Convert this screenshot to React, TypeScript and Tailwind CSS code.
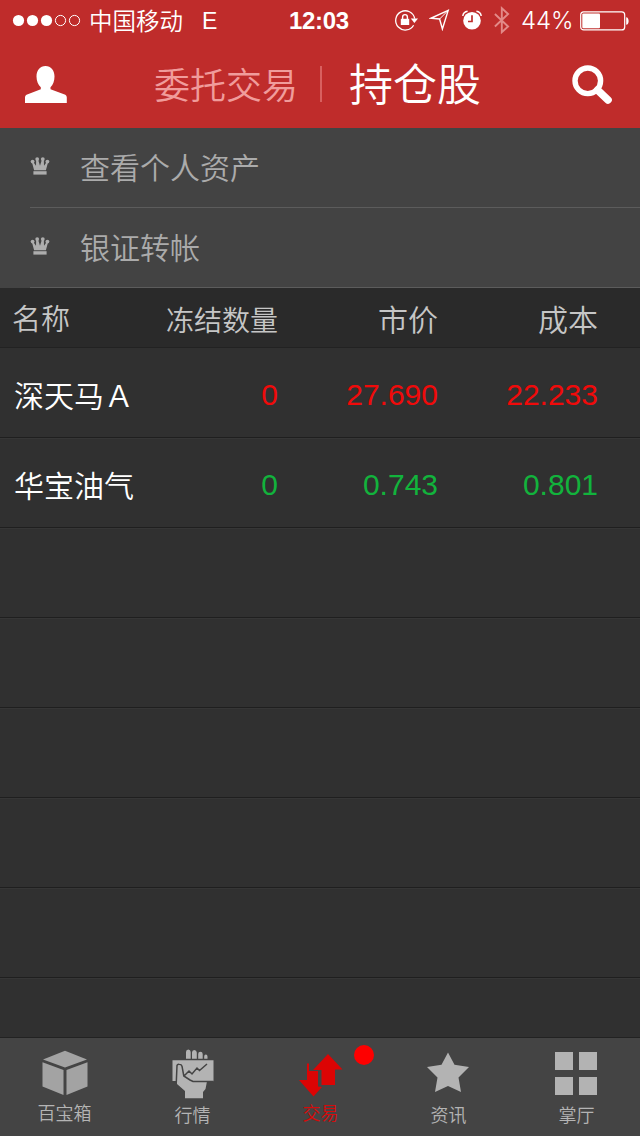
import type { ReactNode } from "react";
import clsx from "clsx";

interface Holding {
  name: string;
  frozen: string;
  price: string;
  cost: string;
  up: boolean;
}

const holdings: Holding[] = [
  { name: "深天马Ａ", frozen: "0", price: "27.690", cost: "22.233", up: true },
  { name: "华宝油气", frozen: "0", price: "0.743", cost: "0.801", up: false },
];

const menu = ["查看个人资产", "银证转帐"];

function StatusBar() {
  return (
    <div className="flex h-10 items-center text-white">
      <svg width="70" height="14" className="ml-3 shrink-0" fill="#fff" stroke="#fff">
        <circle cx="6.5" cy="7.500" r="5.6" stroke="none" />
        <circle cx="20.5" cy="7.500" r="5.6" stroke="none" />
        <circle cx="34.5" cy="7.500" r="5.6" stroke="none" />
        <circle cx="48.5" cy="7.500" r="5.1" fill="none" />
        <circle cx="62.5" cy="7.500" r="5.1" fill="none" />
      </svg>
      <span className="ml-[7px] w-[113px] pt-[3px] text-[23.5px] leading-10 font-[350]">中国移动</span>
      <span className="w-[87px] pt-0.5 text-[23px] leading-10">E</span>
      <span className="w-[105px] pt-0.5 text-[24px] leading-10 font-bold tracking-[-0.3px]">12:03</span>
      {/* rotation lock */}
      <svg width="24" height="24" viewBox="0 0 24 24" className="shrink-0" fill="none" stroke="#fff" strokeWidth="1.3">
        <path d="M19.6 17.2a9.6 9.6 0 1 1 1.1-6.6" />
        <path d="M16.800 10.600h7.200l-3.6 4.400z" fill="#fff" stroke="none" />
        <rect x="6.800" y="10.800" width="8.400" height="6.200" fill="#fff" stroke="none" />
        <path d="M8.6 11V9a2.4 2.4 0 0 1 4.8 0v2" strokeWidth="1.4" />
      </svg>
      {/* location arrow */}
      <svg width="21" height="22" viewBox="0 0 21 22" className="ml-[11px] shrink-0" fill="none" stroke="#fff" strokeWidth="1.4" strokeLinejoin="miter">
        <path d="M19.200 1.400L1.8 9.3l8.8.7L13.4 20z" />
        <path d="M19 1.6l-8.4 8.4" strokeWidth="1" />
      </svg>
      {/* alarm */}
      <svg width="20" height="22" viewBox="0 0 20 22" className="ml-[12px] shrink-0">
        <circle cx="10" cy="11.7" r="8.8" fill="#fff" />
        <path d="M.8 7A5.5 5.5 0 0 1 5.6 2.2M19.2 7a5.5 5.5 0 0 0-4.8-4.8" fill="none" stroke="#fff" strokeWidth="1.5" />
        <path d="M10 6.3v6.2H6" fill="none" stroke="#bf2c2b" strokeWidth="1.7" />
      </svg>
      <svg width="16" height="28" viewBox="0 0 16 28" className="ml-[12px] shrink-0" fill="none" stroke="#e38a88" strokeWidth="1.9">
        <path d="M.9 8l13.2 12.500L7.8 26.200V2.200l6.3 5.800L.9 20.5" />
      </svg>
      <span className="ml-[11px] w-[59px] pt-0.5 text-[24px] leading-10 tracking-[-0.1px] whitespace-nowrap font-['Inter',sans-serif] font-light">44%</span>
      <svg width="50" height="20" viewBox="0 0 50 20" className="mt-px shrink-0">
        <rect x=".7" y=".9" width="44" height="18" rx="3" fill="none" stroke="#fff" strokeWidth="1.2" />
        <rect x="2.3" y="2.5" width="17.7" height="14.8" rx="1" fill="#fff" />
        <path d="M46.2 6.200c3.200 0 3.200 7.600 0 7.600z" fill="#fff" />
      </svg>
    </div>
  );
}

function NavBar() {
  return (
    <div className="flex h-[88px] items-center">
      <svg width="42" height="38" viewBox="0 0 42 38" className="mt-px ml-[25px] shrink-0" fill="#fff">
        <path d="M20.500 0c5.500 0 9 4.300 9 10.500 0 4.500-1.500 8.500-4 10.800v2l13.500 5c2 .8 2.800 1.600 2.800 3.300V37H0v-5.400c0-1.700.8-2.500 2.800-3.300l13-5v-2c-2.600-2.300-4.300-6.300-4.300-10.800C11.500 4.300 15 0 20.500 0z" />
      </svg>
      <span className="ml-[87px] pt-[5px] text-[36px] leading-[83px] font-[350] text-[#f09c9b]">委托交易</span>
      <span className="ml-[22px] h-9 w-[2px] bg-[#d8605f]" />
      <span className="ml-[27px] pt-1 text-[44px] leading-[84px] font-[350] text-white">持仓股</span>
      <svg width="41" height="40" viewBox="0 0 41 40" className="mt-0.5 ml-[91px] shrink-0" fill="none" stroke="#fff">
        <circle cx="15.800" cy="15.800" r="12.800" strokeWidth="5.400" />
        <path d="M25.500 25L36 35" strokeWidth="7.600" strokeLinecap="round" />
      </svg>
    </div>
  );
}

function Crown() {
  return (
    <svg width="20" height="18" viewBox="0 0 20 18" className="shrink-0" fill="#adadad">
      <circle cx="2.600" cy="4.600" r="1.900" />
      <circle cx="7.200" cy="2.100" r="1.900" />
      <circle cx="12.800" cy="2.100" r="1.900" />
      <circle cx="17.400" cy="4.600" r="1.900" />
      <path d="M1.900 5l2.200 8.200h11.800L18.100 5h-1.400l-2.700 3.800L13.800 2h-1.700L10 8.800 7.900 2H6.200L6 8.800 3.300 5z" />
      <path d="M3.400 14.200h13.200v3.400H3.400z" />
    </svg>
  );
}

function MenuRow({ label }: { label: string }) {
  return (
    <div className="h-20 pl-[30px]">
      <div className="flex h-20 items-center border-b border-[#5c5c5c]">
        <div className="mb-[3px] flex">
          <Crown />
        </div>
        <span className="ml-[30px] pt-[3px] text-[30px] leading-[76px] font-[350] text-[#ababab]">{label}</span>
      </div>
    </div>
  );
}

function HoldingRow({ item }: { item?: Holding }) {
  return (
    <div className="flex h-[90px] shrink-0 items-center border-b border-[#1f1f1f] shadow-[0_1px_0_#363636]">
      {item && (
        <>
          <span className="w-[118px] pt-2 pl-3.5 text-[30px] font-[350] whitespace-nowrap text-white">{item.name}</span>
          <div className={clsx("flex pt-[3px] text-right text-[30px]", item.up ? "text-[#f00a0a]" : "text-[#12b33c]")}>
            <span className="w-40">{item.frozen}</span>
            <span className="w-40">{item.price}</span>
            <span className="w-40">{item.cost}</span>
          </div>
        </>
      )}
    </div>
  );
}

interface TabProps {
  label: string;
  children: ReactNode;
  active?: boolean;
  low?: boolean;
}

function Tab({ label, children, active, low }: TabProps) {
  return (
    <div className="relative flex w-32 flex-col items-center pt-3">
      <div className="flex h-[50px] items-start justify-center">{children}</div>
      <span
        className={clsx(
          "pl-px text-[18px] leading-6 font-[350]",
          active ? "text-[#d50b0b]" : "text-[#b4b4b4]",
          low ? "pt-1" : "pt-0.5"
        )}
      >
        {label}
      </span>
      {active && <span className="absolute top-[7px] left-[98px] size-5 rounded-full bg-[#fe0000]" />}
    </div>
  );
}

function TabBar() {
  return (
    <div className="flex h-[98px] shrink-0 bg-[#444444]">
      <Tab label="百宝箱">
        <svg width="46" height="46" viewBox="0 0 46 46" className="ml-px" fill="#a3a3a3">
          <path d="M23 .8L45 9.500 23 17.500 1 9.500z" />
          <path d="M.5 12.200L21.500 20v25L.5 36.500zM45.500 12.200L24.500 20v25l21-8.500z" />
        </svg>
      </Tab>
      <Tab label="行情" low>
        <svg width="42" height="50" viewBox="0 0 42 50" className="-mt-px ml-px" fill="#b3b3b3">
          <path d="M14 9.800V3q0-2.500 2.300-2.500T18.700 3v6.800zM20 9.800V3.500Q20 1 22.300 1t2.500 2.500v6.300zM26.200 9.800V5q0-2.300 2.200-2.300T30.700 5v4.800zM32.200 9.800V7.500q0-2 1.600-2T35.500 7.500v2.300z" />
          <path d="M.5 11.200h41v21H35L33.500 40 31 43v6.200H13V42L5 35v-3H.5z" />
          <path d="M4.300 33L5 16.500q.3-1.500 2.200-1.300 2.300 0 2.800 2L11.800 27l6.200 4 3 1.500H41.500M12.500 26.500L17 22l3 3 5-6 2.500 2.500L35 15" fill="none" stroke="#444" strokeWidth="1.500" />
        </svg>
      </Tab>
      <Tab label="交易" active>
        <svg width="46" height="44" viewBox="0 0 46 44" className="mt-[3px]" fill="#dc0404">
          <path d="M31 1l14.500 15.500H38V32H24.500V17H16z" />
          <path d="M10 10.500h2V18h9v15.500l4 .5-8.500 9.500L2 27h8z" />
        </svg>
      </Tab>
      <Tab label="资讯" low>
        <svg width="42" height="40" viewBox="0 0 42 40" className="mt-0.5" fill="#b3b3b3">
          <path d="M21 .5l6.500 12.200L42 15 31.500 25.500 34 40l-13-6L8 40l2.500-14.500L0 15l14.500-2.300z" />
        </svg>
      </Tab>
      <Tab label="掌厅" low>
        <div className="mt-0.5 grid grid-cols-2 gap-x-1.5 gap-y-[7px]">
          <span className="size-[18px] bg-[#b3b3b3]" />
          <span className="size-[18px] bg-[#b3b3b3]" />
          <span className="size-[18px] bg-[#b3b3b3]" />
          <span className="size-[18px] bg-[#b3b3b3]" />
        </div>
      </Tab>
    </div>
  );
}

export default function App() {
  return (
    <div className="flex h-[1136px] w-[640px] flex-col overflow-hidden bg-[#303030] font-['Liberation_Sans','Noto_Sans_CJK_SC',sans-serif]">
      <header className="shrink-0 bg-[#bf2c2b]">
        <StatusBar />
        <NavBar />
      </header>
      <nav className="shrink-0 bg-[#434343]">
        {menu.map((label) => (
          <MenuRow key={label} label={label} />
        ))}
      </nav>
      <div className="flex h-[60px] shrink-0 items-center border-b border-[#222] bg-[#2a2a2a] pt-[5px] font-[350] text-[#c6c6c6]">
        <span className="w-[118px] pt-0.5 pl-3 text-[29px]">名称</span>
        <span className="w-40 pt-[3px] text-right text-[28px]">冻结数量</span>
        <span className="w-40 text-right text-[30px]">市价</span>
        <span className="w-40 text-right text-[30px]">成本</span>
      </div>
      <main className="flex flex-1 flex-col overflow-hidden">
        {holdings.map((item) => (
          <HoldingRow key={item.name} item={item} />
        ))}
        {[0, 1, 2, 3, 4].map((i) => (
          <HoldingRow key={i} />
        ))}
        <div className="flex-1 border-b border-[#222]" />
      </main>
      <TabBar />
    </div>
  );
}
